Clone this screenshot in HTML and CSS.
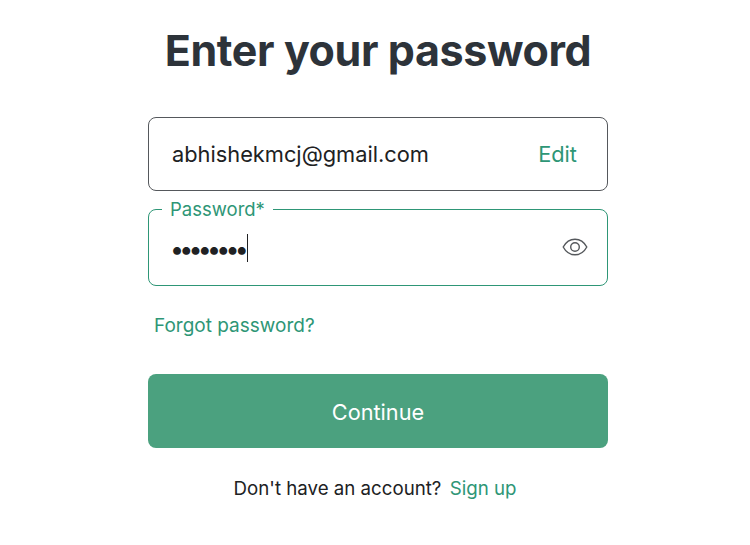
FILE: index.html
```html
<!DOCTYPE html>
<html lang="en">
<head>
  <meta charset="UTF-8" />
  <meta name="viewport" content="width=device-width, initial-scale=1.0" />
  <title>Enter your password</title>
  <link rel="stylesheet" href="styles.css">
</head>
<body>
  <main class="login">
    <h1>Enter your password</h1>

    <div class="email-box">
      <span class="email">abhishekmcj@gmail.com</span>
      <a class="link edit" href="#">Edit</a>
    </div>

    <fieldset class="password-box">
      <legend>Password*</legend>
      <div class="password-row">
        <span class="dots">••••••••</span>
        <svg class="eye" width="26" height="20" viewBox="0 0 26 20" fill="none" stroke="#55585c" stroke-width="1.4">
          <path d="M1.2 10C4 4.8 8.2 2.2 13 2.2S22 4.8 24.8 10C22 15.2 17.800 17.800 13 17.800S4 15.200 1.200 10Z" />
          <circle cx="13" cy="10" r="4.300" />
        </svg>
      </div>
    </fieldset>

    <a class="link forgot" href="#">Forgot password?</a>

    <button type="button" class="continue">Continue</button>

    <p class="signup">Don't have an account? <a class="link" href="#">Sign up</a></p>
  </main>
</body>
</html>
```

FILE: styles.css
```css
body {
  margin: 0;
  background: #fff;
  font-family: Inter, "Liberation Sans", sans-serif;
  color: #202123;
}
.login {
  width: 460px;
  margin-left: 148px;
  display: flex;
  flex-direction: column;
}
h1 {
  margin: 22px 0 0;
  font-size: 43px;
  line-height: 56px;
  font-weight: 700;
  letter-spacing: -0.4px;
  text-align: center;
  color: #2d333a;
}
.link {
  color: #2e9676;
  text-decoration: none;
}
.email-box {
  margin-top: 39px;
  height: 74px;
  box-sizing: border-box;
  padding: 0 30px 0 23px;
  border: 1px solid #55585c;
  border-radius: 8px;
  display: flex;
  align-items: center;
  justify-content: space-between;
  font-size: 21.8px;
}
.password-box {
  margin: 8px 0 0;
  height: 87px;
  box-sizing: border-box;
  padding: 0 19px 0 23px;
  border: 1px solid #2e9676;
  border-radius: 8px;
  min-width: 0;
}
legend {
  margin-left: -10px;
  padding: 0 8px;
  font-size: 18.5px;
  line-height: 20px;
  color: #2e9676;
}
.password-row {
  display: flex;
  align-items: center;
  justify-content: space-between;
  margin-top: 15px;
}
.dots {
  display: block;
  height: 28px;
  margin-left: -2px;
  line-height: 31px;
  font-size: 25px;
  letter-spacing: -4.8px;
  border-right: 1px solid #202123;
  padding-right: 3px;
}
.eye {
  margin-top: -2px;
}
.forgot {
  margin: 28px 0 0 6px;
  font-size: 19px;
  line-height: 24px;
}
.continue {
  margin-top: 36px;
  height: 74px;
  padding-top: 3px;
  border: none;
  border-radius: 8px;
  background: #4ba17f;
  color: #fff;
  font-family: inherit;
  font-size: 21.7px;
  cursor: pointer;
}
.signup {
  margin: 29px 0 0;
  padding-right: 6px;
  font-size: 18.7px;
  line-height: 24px;
  text-align: center;
}
.signup .link {
  margin-left: 3px;
}
```
